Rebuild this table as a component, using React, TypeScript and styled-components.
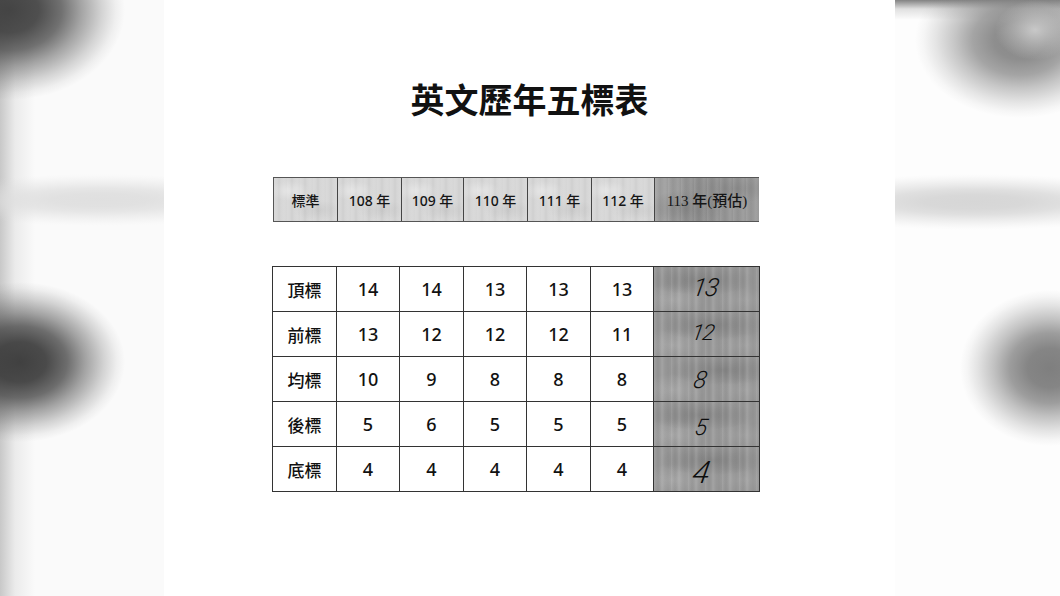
import React from "react";
import styled, { createGlobalStyle } from "styled-components";

const Global = createGlobalStyle`
  html, body { margin: 0; padding: 0; background: #fff; }
  body { width: 1060px; height: 596px; overflow: hidden; }
  #root { width: 1060px; height: 596px; }
`;

const Screen = styled.div`
  display: flex;
  width: 1060px;
  height: 596px;
`;

const blob = (w: number, h: number, x: number, y: number, c: string) =>
  `radial-gradient(${w}px ${h}px at ${x}px ${y}px, rgba(${c},0.95) 0%, rgba(${c},0.9) 25%, rgba(${c},0.72) 45%, rgba(${c},0.45) 62%, rgba(${c},0.2) 80%, rgba(${c},0.06) 92%, rgba(${c},0) 100%)`;

const LeftBlur = styled.div`
  width: 164px;
  height: 596px;
  flex: none;
  background:
    ${blob(105, 80, 20, 362, "55,55,55")},
    ${blob(115, 90, 10, 10, "60,60,60")},
    ${blob(190, 26, 100, 200, "222,222,222")},
    linear-gradient(90deg, rgba(150,150,150,0.5) 0px, rgba(190,190,190,0.25) 15px, rgba(255,255,255,0) 35px),
    #fafafa;
`;

const RightBlur = styled.div`
  width: 165px;
  height: 596px;
  flex: none;
  background:
    ${blob(90, 78, 155, 368, "120,120,120")},
    radial-gradient(40px 30px at 140px 30px, rgba(215,215,215,0.8) 0%, rgba(215,215,215,0.4) 50%, rgba(215,215,215,0) 100%),
    ${blob(105, 78, 125, 40, "130,130,130")},
    ${blob(200, 28, 80, 202, "212,212,212")},
    linear-gradient(180deg, rgba(100,100,100,0.8) 0px, rgba(170,170,170,0.35) 9px, rgba(255,255,255,0) 20px),
    #fdfdfd;
`;

const Page = styled.div`
  width: 731px;
  height: 596px;
  flex: none;
  background: #fff;
  display: flex;
  flex-direction: column;
  padding: 81px 0 0 108px;
  box-sizing: border-box;
`;

const Title = styled.h1`
  margin: 0 0 0 -108px;
  width: 731px;
  text-align: center;
  font-family: "Noto Sans CJK TC", "Noto Sans", sans-serif;
  font-weight: 700;
  font-size: 34px;
  line-height: 36px;
  color: #111;
`;

const HeaderGrid = styled.div`
  margin: 60px 0 0 1px;
  display: grid;
  grid-template-columns: 64px 64px 62px 64px 64px 63px 104px;
  height: 45px;
  width: 486px;
  border: 1px solid #555;
  box-sizing: border-box;
`;

const speckle = `repeating-linear-gradient(90deg, rgba(255,255,255,0.1) 0px, rgba(255,255,255,0) 3px, rgba(0,0,0,0.03) 5px, rgba(255,255,255,0) 7px, rgba(255,255,255,0.08) 10px, rgba(0,0,0,0) 13px)`;

const HeaderCell = styled.div<{ $dark?: boolean; $last?: boolean }>`
  display: flex;
  align-items: center;
  justify-content: center;
  border-right: ${(p) => (p.$last ? "none" : "1px solid #444")};
  font-family: ${(p) =>
    p.$dark
      ? '"Liberation Serif", "Noto Sans CJK TC", serif'
      : '"Noto Sans", "Noto Sans CJK TC", sans-serif'};
  font-size: ${(p) => (p.$dark ? "15px" : "14px")};
  font-weight: 500;
  color: #151515;
  background: ${(p) =>
    p.$dark
      ? `${speckle},
         radial-gradient(40px 18px at 30% 70%, rgba(125,125,125,0.7), rgba(0,0,0,0)),
         radial-gradient(50px 14px at 75% 25%, rgba(128,128,128,0.6), rgba(0,0,0,0)),
         linear-gradient(90deg, #a3a3a3, #8f8f8f 40%, #9a9a9a)`
      : `${speckle},
         radial-gradient(20px 10px at 25% 30%, rgba(232,232,232,0.8), rgba(0,0,0,0)),
         radial-gradient(25px 10px at 70% 75%, rgba(198,198,198,0.7), rgba(0,0,0,0)),
         #d6d6d6`};
`;

const Table = styled.div`
  margin-top: 44px;
  display: grid;
  grid-template-columns: 64px 63px 64px 63px 64px 63px 106px;
  grid-auto-rows: 45px;
  width: 488px;
  border-top: 1px solid #333;
  border-left: 1px solid #333;
  box-sizing: border-box;
`;

const Cell = styled.div<{ $label?: boolean }>`
  display: flex;
  align-items: center;
  justify-content: center;
  border-right: 1px solid #333;
  border-bottom: 1px solid #333;
  background: #fff;
  color: #111;
  font-family: ${(p) =>
    p.$label ? '"Noto Sans CJK TC", sans-serif' : '"Noto Sans", "Open Sans", sans-serif'};
  font-size: ${(p) => (p.$label ? "17px" : "18px")};
  font-weight: 500;
`;

const HandCell = styled.div<{ $shade: number }>`
  display: flex;
  align-items: center;
  justify-content: center;
  border-right: 1px solid #333;
  border-bottom: 1px solid #333;
  background:
    repeating-linear-gradient(90deg, rgba(255,255,255,0.1) 0px, rgba(255,255,255,0) 2px, rgba(0,0,0,0.04) 4px, rgba(255,255,255,0) 6px, rgba(255,255,255,0.12) 8px, rgba(0,0,0,0) 11px, rgba(0,0,0,0.03) 14px, rgba(0,0,0,0) 17px),
    radial-gradient(55px 15px at ${(p) => 45 + p.$shade * 10}% 30%, rgba(128,128,128,0.85), rgba(0,0,0,0)),
    radial-gradient(32px 16px at 18% 75%, rgba(178,178,178,0.6), rgba(0,0,0,0)),
    radial-gradient(32px 12px at 85% 75%, rgba(168,168,168,0.5), rgba(0,0,0,0)),
    #979797;
`;

const Hand = styled.span<{ $dx: number; $dy: number; $size: number }>`
  font-family: "Roboto", "Lato", sans-serif;
  font-style: italic;
  font-weight: 300;
  font-size: ${(p) => p.$size}px;
  color: #0d0d0d;
  transform: translate(${(p) => p.$dx}px, ${(p) => p.$dy}px) skewX(-10deg);
  letter-spacing: -1px;
`;

const header = ["標準", "108 年", "109 年", "110 年", "111 年", "112 年"];

const rows: { label: string; vals: string[]; hand: string; dx: number; dy: number; size: number }[] = [
  { label: "頂標", vals: ["14", "14", "13", "13", "13"], hand: "13", dx: -1, dy: -2, size: 25 },
  { label: "前標", vals: ["13", "12", "12", "12", "11"], hand: "12", dx: -4, dy: -2, size: 22 },
  { label: "均標", vals: ["10", "9", "8", "8", "8"], hand: "8", dx: -7, dy: 1, size: 24 },
  { label: "後標", vals: ["5", "6", "5", "5", "5"], hand: "5", dx: -6, dy: 3, size: 23 },
  { label: "底標", vals: ["4", "4", "4", "4", "4"], hand: "4", dx: -6, dy: 3, size: 31 },
];

export default function App() {
  return (
    <>
      <Global />
      <Screen>
        <LeftBlur />
        <Page>
          <Title>英文歷年五標表</Title>
          <HeaderGrid>
            {header.map((h) => (
              <HeaderCell key={h}>{h}</HeaderCell>
            ))}
            <HeaderCell $dark $last>
              113 年(預估)
            </HeaderCell>
          </HeaderGrid>
          <Table>
            {rows.map((r, i) => (
              <React.Fragment key={r.label}>
                <Cell $label>{r.label}</Cell>
                {r.vals.map((v, j) => (
                  <Cell key={j}>{v}</Cell>
                ))}
                <HandCell $shade={i % 3}>
                  <Hand $dx={r.dx} $dy={r.dy} $size={r.size}>
                    {r.hand}
                  </Hand>
                </HandCell>
              </React.Fragment>
            ))}
          </Table>
        </Page>
        <RightBlur />
      </Screen>
    </>
  );
}
